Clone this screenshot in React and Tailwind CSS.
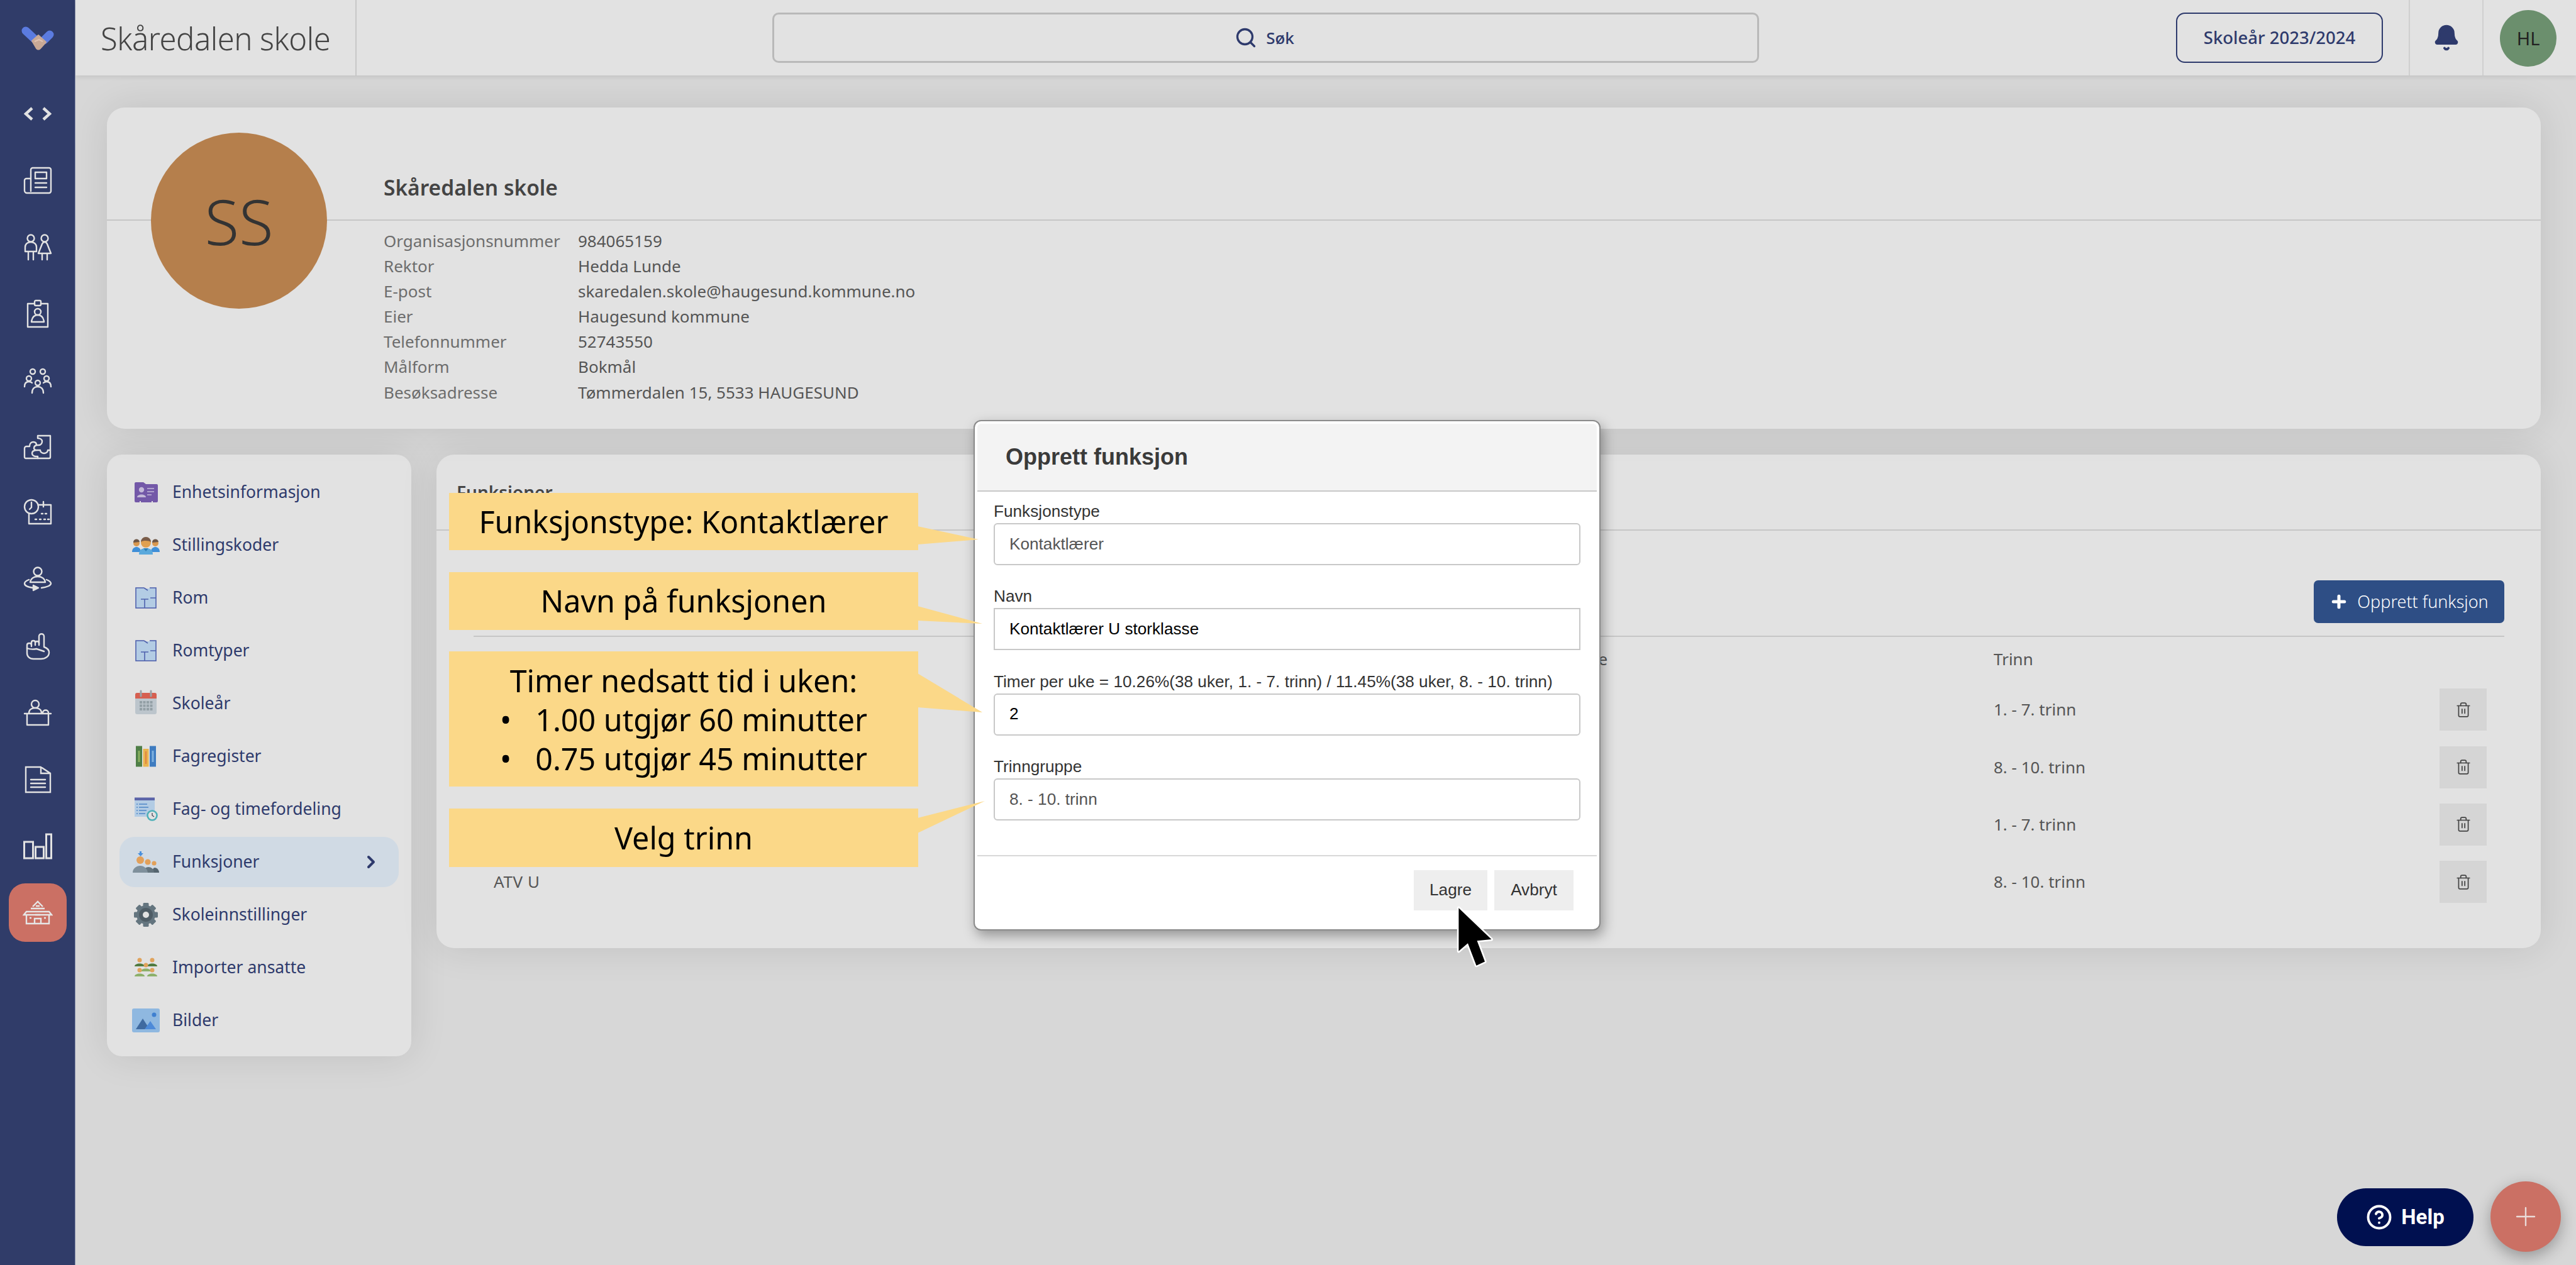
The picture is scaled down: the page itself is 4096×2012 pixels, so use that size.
import { ChevronRight, Plus, Search, Trash2, Bell, CircleHelp } from "lucide-react";

const sans = "font-['Noto_Sans',sans-serif]";
const arial = "font-['Liberation_Sans',sans-serif]";

function Line({ children, box = 48 }) {
  return (
    <svg width="48" height="48" viewBox={`0 0 ${box} ${box}`} fill="none" stroke="#e2e2e2" strokeWidth="2.4" strokeLinejoin="round" strokeLinecap="round">
      {children}
    </svg>
  );
}

const railIcons = [
  <Line key="news">
    <path d="M13 41V7a3 3 0 0 1 3-3h26a3 3 0 0 1 3 3v34a3 3 0 0 1-3 3H7a4 4 0 0 1-4-4V24a3 3 0 0 1 3-3h7" />
    <rect x="20" y="11" width="18" height="10" />
    <path d="M20 28h18M20 35h18" />
  </Line>,
  <Line key="kids">
    <circle cx="13" cy="10" r="5.5" /><circle cx="35" cy="10" r="5.5" />
    <path d="M4 31v-7c0-5 4-8 9-8s9 3 9 8v7zM9 31v13M17 31v13" />
    <path d="M35 16c2 0 3 1 4 3l6 15H25l6-15c1-2 2-3 4-3zM31 34v10M39 34v10" />
  </Line>,
  <Line key="badge">
    <path d="M19 8H8v37h32V8H29" />
    <rect x="19" y="3" width="10" height="8" rx="2" />
    <circle cx="24" cy="21" r="5" />
    <path d="M14 37c1-8 5-11 10-11s9 3 10 11z" />
  </Line>,
  <Line key="group">
    <circle cx="16" cy="10" r="4" /><circle cx="32" cy="10" r="4" />
    <circle cx="10" cy="21" r="4" /><circle cx="38" cy="21" r="4" /><circle cx="24" cy="28" r="4" />
    <path d="M3 34c0-6 3-8 7-8 2 0 4 1 5 2M45 34c0-6-3-8-7-8-2 0-4 1-5 2M15 44c0-7 4-10 9-10s9 3 9 10" />
  </Line>,
  <Line key="puzzle">
    <path d="M24 6h20v34a2 2 0 0 1-2 2H5a2 2 0 0 1-2-2V26c0-2 2-3 3-3h5c0-5 3-7 6-7s5 2 5 5h3c5 0 6-4 6-6 0-3-3-5-7-5z" />
    <path d="M22 21c-3 1-4 3-4 5s2 3 5 3h5c0 3 3 5 6 5s6-2 6-5h4M23 29c-5 0-8 2-8 5s3 5 6 5h3v3" />
  </Line>,
  <Line key="clockcal">
    <circle cx="14" cy="14" r="11" />
    <path d="M14 7v8l-3 3M25 11h20v30H10V25M33 6v8M20 34h2M27 34h2M34 34h2M40 34h2M30 25h2M36 25h2" />
  </Line>,
  <Line key="rotate">
    <circle cx="24" cy="11" r="6.5" />
    <path d="M12 28c1-6 6-9 12-9s11 3 12 9z" />
    <path d="M10 24C5 26 3 28 3 30c0 3 5 6 14 7M30 37c9-1 15-4 15-7 0-2-2-4-7-6" />
    <path d="M17 33l8 4-8 4z" fill="#e2e2e2" />
  </Line>,
  <Line key="hand">
    <path d="M26 20V8c0-5 8-5 8 0v17c6 2 8 5 8 9 0 6-6 10-13 10H17c-6 0-10-4-10-9v-9" />
    <path d="M7 26v-4c0-4 7-4 7 0v2M14 24v-6c0-4 6-4 6 0v4M20 22v-3c0-4 6-4 6 0v3" />
    <path d="M7 27c5 2 10 2 15 1l12 4" />
  </Line>,
  <Line key="desk">
    <circle cx="20" cy="10" r="6" />
    <path d="M10 24c0-5 4-8 10-8s10 3 10 8M32 24c0-6 9-6 9 0M3 25h42M7 25v18h34V25" />
  </Line>,
  <Line key="doc">
    <path d="M5 4h24l15 10v30H5zM29 4v10h15M13 24h23M13 30h23M13 36h23" strokeLinejoin="miter" />
  </Line>,
  <Line key="chart">
    <path d="M3 17h14v26H3zM21 25h13v18H21zM38 5h8v38h-8z" strokeWidth="3" strokeLinejoin="miter" transform="translate(-0.5 0)" />
  </Line>,
];

function Rail() {
  return (
    <aside className="w-[120px] shrink-0 bg-[#303c69] border-r border-[#8b93ae] flex flex-col items-center">
      <div className="h-[122px] flex items-center justify-center">
        <svg width="52" height="38" viewBox="0 0 52 38">
          <path d="M7 7 L23 22" stroke="#5b7be0" strokeWidth="13" strokeLinecap="round" />
          <path d="M45 13 L36 22" stroke="#5b7be0" strokeWidth="13" strokeLinecap="round" />
          <path d="M17 23 L27 14 L39 25 L30 35 Q27 38 24 35 Z" fill="#c9a996" stroke="#c9a996" strokeWidth="2" strokeLinejoin="round" />
          <path d="M21 24l7-3 6 3" stroke="#e2c4b2" strokeWidth="2" fill="none" />
        </svg>
      </div>
      <div className="h-[112px] pt-[6px] flex items-center justify-center">
        <svg width="44" height="24" viewBox="0 0 44 24" fill="none" stroke="#e2e2e2" strokeWidth="4.5">
          <path d="M13 3 L3 12 L13 21" /><path d="M31 3 L41 12 L31 21" />
        </svg>
      </div>
      {railIcons.map((icon) => (
        <div key={icon.key} className="h-[105.9px] flex items-center justify-center">{icon}</div>
      ))}
      <div className="mt-[6px] w-[92px] h-[93px] rounded-[26px] bg-[#cb7064] flex items-center justify-center">
        <svg width="48" height="40" viewBox="0 0 48 40" fill="none" stroke="#e6e6e6" strokeWidth="2.4" strokeLinejoin="miter">
          <path d="M16 11 L24 3 L32 11 M13 14h22M6 19h36L46 24H2zM6 24v14h36V24M19 38v-8h10v8" />
          <path d="M21 10h6M11 29h3M34 29h3M20 24h8" />
        </svg>
      </div>
    </aside>
  );
}

function TopBar() {
  return (
    <header className="h-[120px] shrink-0 bg-[#e2e2e2] flex items-stretch shadow-[0_2px_8px_rgba(0,0,0,0.1)] relative">
      <div className={`w-[447px] border-r-2 border-[#c8c8c8] pl-[40px] pt-[3px] flex items-center text-[#444] font-light text-[49px] tracking-[-0.5px] ${sans}`}>
        Skåredalen skole
      </div>
      <div className="w-[661px]" />
      <div className="w-[1569px] my-[20px] h-[80px] border-[3px] border-[#b9b9b9] rounded-[10px] flex items-center justify-center gap-[14px] text-[#2e3a6c]">
        <Search size={36} strokeWidth={2.2} className="-ml-[4px]" />
        <span className={`text-[26px] font-medium ${sans}`}>Søk</span>
      </div>
      <div className="w-[663px]" />
      <div className={`w-[329px] my-[20px] h-[80px] border-[2.5px] border-[#2e3a6c] rounded-[14px] flex items-center justify-center text-[#2e3a6c] text-[27.5px] font-medium ${sans}`}>
        Skoleår 2023/2024
      </div>
      <div className="w-[41px]" />
      <div className="w-[119px] border-x-2 border-[#cfcfcf] flex items-center justify-center">
        <Bell size={44} fill="#2e3a6c" stroke="#2e3a6c" />
      </div>
      <div className="ml-[26px] mt-[16px] w-[90px] h-[90px] rounded-full bg-[#6b8f6d] flex items-center justify-center">
        <span className={`text-[29px] text-[#222] ${sans}`}>HL</span>
      </div>
    </header>
  );
}

const orgInfo = [
  ["Organisasjonsnummer", "984065159"],
  ["Rektor", "Hedda Lunde"],
  ["E-post", "skaredalen.skole@haugesund.kommune.no"],
  ["Eier", "Haugesund kommune"],
  ["Telefonnummer", "52743550"],
  ["Målform", "Bokmål"],
  ["Besøksadresse", "Tømmerdalen 15, 5533 HAUGESUND"],
];

function OrgCard() {
  return (
    <section className={`relative h-[511px] bg-[#e2e2e2] rounded-[28px] shadow-[0_0_60px_rgba(0,0,0,0.1)] ${sans}`}>
      <div className="h-[180px] border-b-2 border-[#c6c6c6] pl-[440px] pt-[103px]">
        <h2 className="text-[33.5px] leading-[48px] font-semibold text-[#444]">Skåredalen skole</h2>
      </div>
      <dl className="pl-[440px] pt-[12px] grid grid-cols-[309px_1fr] text-[26px] leading-[40.1px]">
        {orgInfo.map(([k, v]) => (
          <div key={k} className="contents">
            <dt className="text-[#6d6d6d]">{k}</dt>
            <dd className="text-[#555]">{v}</dd>
          </div>
        ))}
      </dl>
      <div className="absolute left-[70px] top-[40px] w-[280px] h-[280px] rounded-full bg-[#b57f4c] flex items-center justify-center text-[100px] font-light text-[#333]">
        SS
      </div>
    </section>
  );
}

function SideIcon({ children }) {
  return <svg width="56" height="56" viewBox="0 0 56 56" className="shrink-0">{children}</svg>;
}

const Room = () => (
  <SideIcon>
    <rect x="12" y="12" width="32" height="32" fill="#b3cce4" stroke="#4f61ad" strokeWidth="1.6" />
    <path d="M25 11h9v2h-9z" fill="#e2e2e2" />
    <path d="M25 12l6 4M35 28h9M20 30h12M26 30v14" fill="none" stroke="#4f61ad" strokeWidth="1.6" />
  </SideIcon>
);

const sideItems = [
  ["Enhetsinformasjon", (
    <SideIcon>
      <path d="M10 14a2 2 0 0 1 2-2h12l4 3h17a2 2 0 0 1 2 2v25a2 2 0 0 1-2 2H12a2 2 0 0 1-2-2z" fill="#7358a8" />
      <circle cx="21" cy="24" r="4.2" fill="#c3b8d8" /><path d="M14 36c0-6 14-6 14 0z" fill="#c3b8d8" />
      <path d="M30 22h11M30 27h11M30 32h7" stroke="#c3b8d8" strokeWidth="1.6" />
      <path d="M19 44v-2M38 44v-2" stroke="#e2e2e2" strokeWidth="2" />
    </SideIcon>
  )],
  ["Stillingskoder", (
    <SideIcon>
      <path d="M6 39c0-6 4-8 7-8s7 2 7 8zM36 39c0-6 4-8 7-8s7 2 7 8z" fill="#3f8fd8" />
      <circle cx="13" cy="25" r="5" fill="#d9984f" /><circle cx="43" cy="25" r="5" fill="#d9984f" />
      <path d="M8 24a5 5 0 0 1 10-1zM38 24a5 5 0 0 1 10-1z" fill="#6d5647" />
      <path d="M17 43c0-8 5-10 11-10s11 2 11 10z" fill="#5aa9dc" />
      <path d="M24 33l4 5 4-5z" fill="#2f7fb6" />
      <circle cx="28" cy="24" r="8" fill="#e0a050" />
      <path d="M20 23a8 8 0 0 1 16 0c-3-2-12-3-16 0z" fill="#7a5c48" />
    </SideIcon>
  )],
  ["Rom", <Room />],
  ["Romtyper", <Room />],
  ["Skoleår", (
    <SideIcon>
      <rect x="11" y="11" width="34" height="34" rx="3" fill="#bcc5cc" />
      <path d="M11 20v-6a3 3 0 0 1 3-3h28a3 3 0 0 1 3 3v6z" fill="#d65f50" />
      <path d="M20 8v8M36 8v8" stroke="#9aa3a8" strokeWidth="3" strokeLinecap="round" />
      {[18, 23.5, 29, 34.5].map((x) => [24, 29.5, 35].map((y) => <rect key={`${x}-${y}`} x={x} y={y} width="4" height="4" fill="#93a0a6" />))}
    </SideIcon>
  )],
  ["Fagregister", (
    <SideIcon>
      <rect x="12" y="11.5" width="10" height="33" fill="#4f7f47" /><rect x="15.5" y="19" width="3" height="18" fill="#8ab060" />
      <rect x="23.500" y="16" width="9" height="28.500" fill="#e9b44f" /><rect x="27" y="20" width="2" height="20" fill="#e0823f" />
      <rect x="34" y="11.5" width="10" height="33" fill="#3f7cc0" /><rect x="37.5" y="19" width="3" height="18" fill="#7fb2e0" />
    </SideIcon>
  )],
  ["Fag- og timefordeling", (
    <SideIcon>
      <rect x="10" y="10" width="32" height="30" fill="#b3cce4" />
      <rect x="10" y="9.500" width="32" height="4.500" fill="#5b64a8" />
      <path d="M17 20h13M17 25h15M17 30h12M17 35h10M13 20h2M13 25h2M13 30h2M13 35h2" stroke="#4f86c6" strokeWidth="1.4" />
      <circle cx="38" cy="38" r="7.500" fill="#e2e2e2" stroke="#4fb0b8" strokeWidth="2.600" />
      <path d="M38 34v4l3 2" stroke="#445" strokeWidth="1.300" fill="none" />
    </SideIcon>
  )],
  ["Funksjoner", (
    <SideIcon>
      <path d="M18 11h3v3h3l-4.500 5-4.500-5h3z" fill="#4a90dc" />
      <circle cx="19" cy="25" r="6" fill="#e2a05a" /><circle cx="31" cy="28" r="4.600" fill="#e2a05a" /><circle cx="41" cy="30" r="3.600" fill="#e2a05a" />
      <path d="M38 45c0-5 2-8 4-8 4 0 7 4 7 8z" fill="#55656f" />
      <path d="M24 45c0-6 4-9 8-9s9 3 9 9z" fill="#64747e" />
      <path d="M7 45c0-7 6-11 12-11s11 4 12 11z" fill="#7f909c" />
    </SideIcon>
  )],
  ["Skoleinnstillinger", (
    <SideIcon>
      {[0, 45, 90, 135].map((a) => (
        <rect key={a} x="23.500" y="9" width="9" height="38" rx="1.500" fill="#64757f" transform={`rotate(${a} 28 28)`} />
      ))}
      <circle cx="28" cy="28" r="15" fill="#64757f" />
      <circle cx="28" cy="28" r="11" fill="#4f5d66" />
      <circle cx="28" cy="28" r="5" fill="#e2e2e2" />
    </SideIcon>
  )],
  ["Importer ansatte", (
    <SideIcon>
      {[[18, 19, "#4f7a3f"], [38, 19, "#4f7a3f"], [28, 27, "#8cb06a"], [18, 35, "#8cb06a"], [38, 35, "#8cb06a"]].map(([x, y, c]) => (
        <g key={`${x}${y}`}>
          <circle cx={x} cy={y - 3} r="3.500" fill="#e0a35c" />
          <path d={`M${x - 8} ${y + 7}c0-6 16-6 16 0z`} fill={c} />
        </g>
      ))}
    </SideIcon>
  )],
  ["Bilder", (
    <SideIcon>
      <rect x="6" y="9" width="44" height="38" rx="3" fill="#8fb8e0" />
      <path d="M12 42l11-17 11 17z" fill="#3f6aa0" />
      <path d="M26 42l9-13 9 13z" fill="#4d8ad8" />
      <circle cx="41" cy="19" r="3.500" fill="#3f80d0" />
    </SideIcon>
  )],
];

function SideNav() {
  return (
    <nav className={`w-[484px] h-[957px] shrink-0 bg-[#e2e2e2] rounded-[24px] shadow-[0_0_60px_rgba(0,0,0,0.1)] pt-[20px] px-[20px] flex flex-col gap-[4px] ${sans}`}>
      {sideItems.map(([label, icon]) => {
        const active = label === "Funksjoner";
        return (
          <div key={label} className={`h-[80px] shrink-0 rounded-[24px] pl-[14px] pr-[28px] flex items-center gap-[14px] text-[26.5px] text-[#2e3a6c] ${active ? "bg-[#d0dae4]" : ""}`}>
            {icon}
            <span>{label}</span>
            {active && <ChevronRight className="ml-auto" size={32} strokeWidth={3} />}
          </div>
        );
      })}
    </nav>
  );
}

const rows = [
  { name: "", trinn: "1. - 7. trinn" },
  { name: "", trinn: "8. - 10. trinn" },
  { name: "", trinn: "1. - 7. trinn" },
  { name: "ATV U", trinn: "8. - 10. trinn" },
];

function FunctionPanel() {
  return (
    <section className={`flex-1 h-[785px] bg-[#e2e2e2] rounded-[28px] shadow-[0_0_60px_rgba(0,0,0,0.1)] ${sans}`}>
      <div className="h-[121px] border-b-2 border-[#c6c6c6] pl-[32px] flex items-center">
        <h3 className="text-[28px] font-semibold text-[#444]">Funksjoner</h3>
      </div>
      <div className="ml-[59px] mr-[58px] h-[169px] border-b-2 border-[#c6c6c6] flex items-end justify-end pb-[20px]">
        <button className="w-[303px] h-[68px] rounded-[7px] bg-[#2e4e85] text-white text-[27px] font-light flex items-center justify-center gap-[14px]">
          <Plus size={30} strokeWidth={4} />
          Opprett funksjon
        </button>
      </div>
      <div className="pl-[91px] grid grid-cols-[1595px_790px_709px_75px] text-[26px] text-[#555] items-center">
        <div className="h-[70px]" />
        <div className="h-[70px] flex items-center">Funksjonstype</div>
        <div className="h-[70px] flex items-center">Trinn</div>
        <div />
        {rows.map((r, i) => (
          <div key={i} className="contents">
            <div className="h-[91.4px] flex items-center tracking-[0.6px]">{r.name}</div>
            <div />
            <div>{r.trinn}</div>
            <div className="h-[67px] bg-[#d5d5d5] flex items-center justify-center">
              <Trash2 size={26} strokeWidth={1.6} color="#444" />
            </div>
          </div>
        ))}
      </div>
    </section>
  );
}

const fields = [
  { label: "Funksjonstype", value: "Kontaktlærer", text: "text-[#555]", round: "rounded-[6px]" },
  { label: "Navn", value: "Kontaktlærer U storklasse", text: "text-black", round: "" },
  { label: "Timer per uke = 10.26%(38 uker, 1. - 7. trinn) / 11.45%(38 uker, 8. - 10. trinn)", value: "2", text: "text-black", round: "rounded-[6px]" },
  { label: "Trinngruppe", value: "8. - 10. trinn", text: "text-[#555]", round: "rounded-[6px]" },
];

function Modal() {
  return (
    <div className={`absolute left-[1548px] top-[668px] w-[997px] h-[812px] bg-white rounded-[12px] border-2 border-[#8a8a8a] p-[4px] shadow-[4px_8px_20px_rgba(0,0,0,0.35)] flex flex-col ${arial}`}>
      <div className="h-[108px] shrink-0 bg-[#f3f3f3] border-b-2 border-[#c8c8c8] rounded-t-[6px] pl-[45px] flex items-center text-[36px] font-bold text-[#3a3a3a]">
        Opprett funksjon
      </div>
      <div className="px-[26px] pt-[14px] flex-1 flex flex-col gap-[32.3px]">
        {fields.map((f) => (
          <div key={f.label}>
            <div className="h-[36px] leading-[34px] text-[26.2px] text-[#333] whitespace-nowrap">{f.label}</div>
            <div className={`h-[67px] border-[2.5px] border-[#c8c8c8] px-[23px] flex items-center text-[26.2px] ${f.text} ${f.round}`}>{f.value}</div>
          </div>
        ))}
      </div>
      <div className="h-[114px] shrink-0 border-t-2 border-[#d8d8d8] pt-[22px] pr-[37px] flex justify-end gap-[11px] text-[26.2px] text-[#333]">
        <div className="w-[117px] h-[64px] bg-[#eeeeee] flex items-center justify-center">Lagre</div>
        <div className="w-[126px] h-[64px] bg-[#eeeeee] flex items-center justify-center">Avbryt</div>
      </div>
    </div>
  );
}

function Callouts() {
  const box = "bg-[#fbd888] flex items-center justify-center text-black text-[48.4px]";
  return (
    <div className={`absolute left-[714px] top-[784px] w-[746px] flex flex-col gap-[34.5px] ${sans}`}>
      <div className={`${box} h-[91px]`}>Funksjonstype: Kontaktlærer</div>
      <div className={`${box} h-[92px]`}>Navn på funksjonen</div>
      <div className={`${box} h-[215px] flex-col leading-[62px]`}>
        <div>Timer nedsatt tid i uken:</div>
        <div className="flex gap-[38px]"><span>•</span><span>1.00 utgjør 60 minutter</span></div>
        <div className="flex gap-[38px]"><span>•</span><span>0.75 utgjør 45 minutter</span></div>
      </div>
      <div className={`${box} h-[93px]`}>Velg trinn</div>
    </div>
  );
}

function Tails() {
  return (
    <svg className="absolute left-[1459px] top-[830px] overflow-visible" width="110" height="310" viewBox="1459 830 110 310" fill="#fbd888">
      <polygon points="1459,837 1556,858 1459,866" />
      <polygon points="1459,964 1562,992 1459,987" />
      <polygon points="1459,1071 1562,1133 1459,1125" />
      <polygon points="1459,1301 1566,1274 1459,1325" />
    </svg>
  );
}

function Cursor() {
  return (
    <svg className="absolute left-[2314px] top-[1440px]" width="67" height="104" viewBox="0 0 64 100">
      <path d="M5 4 L5 70 L19 58 L32 92 L45 86 L33 54 L55 52 Z" fill="black" stroke="white" strokeWidth="5" strokeLinejoin="round" paintOrder="stroke" />
    </svg>
  );
}

export default function App() {
  return (
    <div className="relative w-[4096px] h-[2012px] overflow-hidden bg-[#d7d7d7] flex">
      <Rail />
      <main className="flex-1 flex flex-col">
        <TopBar />
        <div className="pl-[50px] pr-[56px] pt-[51px] flex flex-col gap-[41px]">
          <OrgCard />
          <div className="flex gap-[40px] items-start">
            <SideNav />
            <FunctionPanel />
          </div>
        </div>
      </main>
      <Callouts />
      <Modal />
      <Tails />
      <Cursor />
      <div className="absolute left-[3716px] top-[1890px] w-[217px] h-[92px] rounded-full bg-[#001050] flex items-center justify-center gap-[14px] text-white">
        <CircleHelp size={42} strokeWidth={2.2} />
        <span className="font-['Roboto',sans-serif] font-bold text-[33px]">Help</span>
      </div>
      <div className="absolute left-[3960px] top-[1879px] w-[112px] h-[112px] rounded-full bg-[#cb7064] shadow-[0_8px_24px_rgba(0,0,0,0.3)] flex items-center justify-center">
        <Plus size={48} strokeWidth={1.2} color="#eadcd9" />
      </div>
    </div>
  );
}
